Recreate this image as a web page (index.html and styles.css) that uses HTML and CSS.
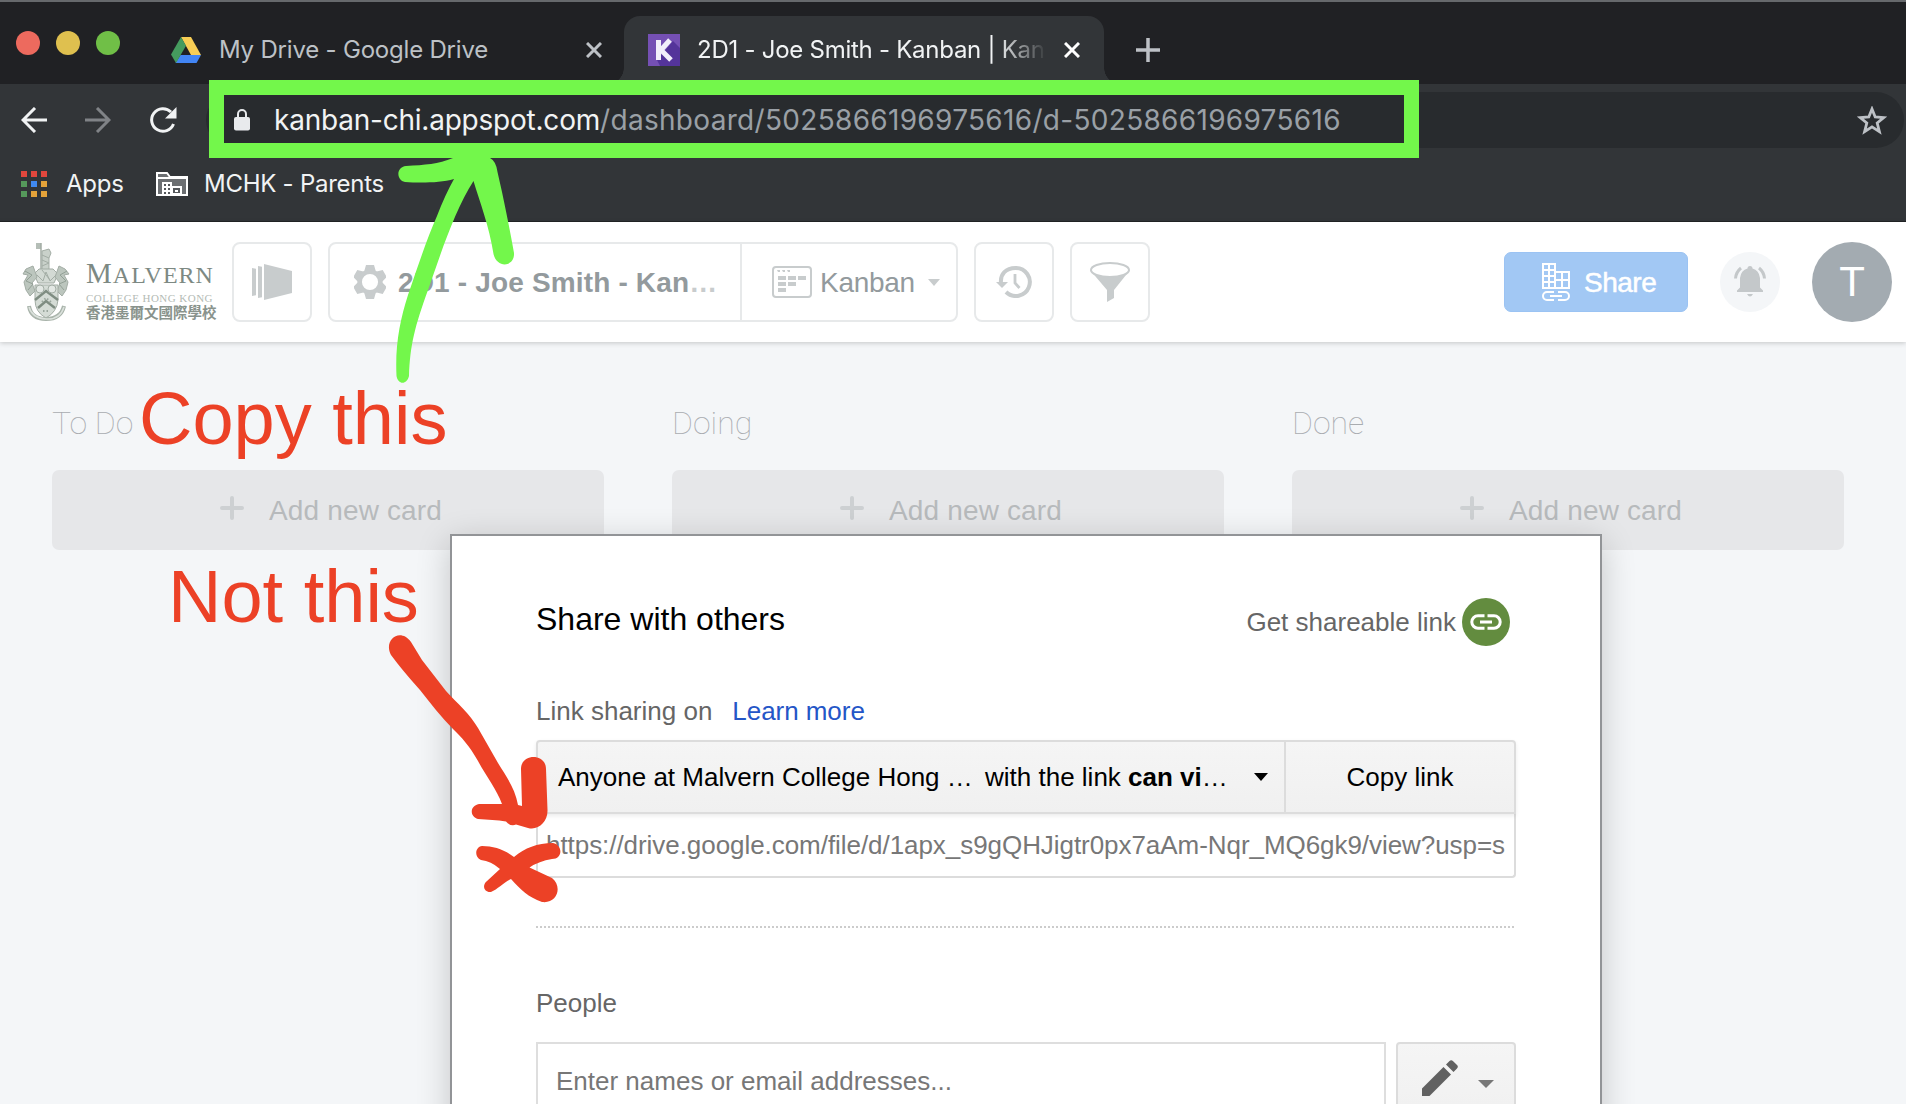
FILE: index.html
```html
<!DOCTYPE html>
<html lang="en">
<head>
<meta charset="utf-8">
<title>2D1 - Joe Smith - Kanban</title>
<link rel="stylesheet" href="styles.css">
</head>
<body>
<div class="window">
  <header class="chrome">
    <div class="tabstrip">
      <div class="lights"><i class="light red"></i><i class="light yellow"></i><i class="light green"></i></div>
      <div class="tab">
        <svg class="drive" width="30" height="26" viewBox="0 0 30 26"><path fill="#f8ce55" d="M10 0h10l10 18H20z"/><path fill="#4285f4" d="M9.500 18H30l-4.500 8H4.500z"/><path fill="#459b5e" d="M10 0l5 8.700L5 26 0 17.500z"/></svg>
        <span class="tab-title">My Drive - Google Drive</span>
        <svg class="close" width="16" height="16" viewBox="0 0 16 16"><path d="M1 1l14 14M15 1L1 15"/></svg>
      </div>
      <div class="tab active">
        <svg class="kicon" width="32" height="32" viewBox="0 0 32 32"><path fill="#7550b4" d="M0 0h32v32H0z"/><path fill="#54349a" d="M25 7l7 7v18H12L9 26z"/><path fill="none" stroke="#f2effa" stroke-width="5" d="M10.500 6v20M22 6l-9 10 10 10"/></svg>
        <span class="tab-title">2D1 - Joe Smith - Kanban | Kan</span>
        <svg class="close" width="16" height="16" viewBox="0 0 16 16"><path d="M1 1l14 14M15 1L1 15"/></svg>
      </div>
      <svg class="newtab" width="24" height="24" viewBox="0 0 24 24"><path d="M12 0v24M0 12h24"/></svg>
    </div>
    <div class="toolbar">
      <svg class="nav" width="26" height="26" viewBox="0 0 26 26"><path d="M26 13H2M14 1L2 13l12 12"/></svg>
      <svg class="nav dim" width="26" height="26" viewBox="0 0 26 26"><path d="M0 13h24M12 1l12 12-12 12"/></svg>
      <svg class="nav reload" width="28" height="28" viewBox="0 0 28 28"><path d="M24.500 18A11.300 11.300 0 1 1 22 6"/><path class="solid" d="M27.500 1v11.500H16z"/></svg>
      <div class="omnibox">
        <svg width="16" height="22" viewBox="0 0 16 22"><rect y="8" width="16" height="13.500" rx="2" fill="#e8eaed"/><path d="M4 9V5a4 4 0 0 1 8 0v4" fill="none" stroke="#e8eaed" stroke-width="2"/></svg>
        <span class="url"><b>kanban-chi.appspot.com</b><span>/dashboard/5025866196975616/d-5025866196975616</span></span>
        <svg class="star" width="30" height="29" viewBox="0 0 30 29"><path d="M15 3l3.200 8 8.600.6-6.600 5.400 2.200 8.600L15 20.800l-7.400 4.800 2.200-8.600-6.600-5.400 8.600-.6z"/></svg>
      </div>
    </div>
    <div class="bookmarks">
      <div class="apps"><i></i><i></i><i></i><i></i><i></i><i></i><i></i><i></i><i></i></div>
      <span class="bm-apps">Apps</span>
      <svg width="32" height="26" viewBox="0 0 32 26"><path d="M1 24V2h10l3 4h17v18z" fill="#6c6f72" stroke="#fff" stroke-width="2"/><path d="M2 7h29" stroke="#fff" stroke-width="2"/><path fill="#fff" d="M6 11h10v4h10v9H6z"/><path fill="#55585b" d="M8 13h2v2H8zm4 0h2v2h-2zm-4 4h2v2H8zm4 0h2v2h-2zm-4 4h2v2H8zm4 0h2v2h-2zm5-4h7v5h-7z"/><path fill="#fff" d="M19 19h3v2h-3z"/></svg>
      <span>MCHK - Parents</span>
    </div>
  </header>

  <nav class="appbar">
    <div class="brand">
      <svg width="48" height="80" viewBox="0 0 48 80" fill="none" stroke="#a3ada5">
        <path fill="#b5beb7" stroke="none" d="M14 1h5v6h-5z"/><path d="M19 1v26" stroke-width="1.500"/>
        <path fill="#c9d1ca" d="M20 9l7-2 2 4-2 5v12h-7z"/><path d="M20 13l7 3M20 18l7 3M20 24l7-3"/>
        <path fill="#d3dad4" d="M12 32l5-5h14l5 5-4 9H16z"/><path d="M15 33l6 6 3-9 4 9 6-6M20 28l8 10"/>
        <path fill="#bcc6be" d="M11 24l-7 3-3 5 5 1-4 7 2 8 4 6 5-5-3-8 5-6zM37 24l6 3 4 5-5 1 4 7-2 8-4 6-5-5 3-8-5-6z"/>
        <path stroke="#93a096" d="M3 29l7 4-6 6 7 3-5 6M45 29l-7 4 6 6-7 3 5 6"/>
        <path fill="#d5dcd6" d="M13 43h23v15q-1 12-12 18-11-6-11-18z"/><path d="M13 58l11-9 12 9M16 66l8-7 9 7" stroke-width="2.500" stroke="#7f8d82"/>
        <circle cx="18" cy="47" r="4" fill="#e3e8e4"/><circle cx="30" cy="47" r="4" fill="#e3e8e4"/>
        <path stroke="#9aa69d" stroke-width="2" stroke-dasharray="1.500 2" d="M20 60l4-4 5 4M21 69h7"/>
        <path stroke="#a9b4ab" stroke-width="4" d="M7 64q2 13 17 13t18-13"/><path stroke="#dbe1dc" stroke-width="1.500" d="M7 65q3 11 17 12t18-12"/>
      </svg>
      <div class="brand-text">
        <div class="malvern"><big>M</big>ALVERN</div>
        <div class="college">COLLEGE HONG KONG</div>
        <div class="han">香港墨爾文國際學校</div>
      </div>
    </div>
    <div class="tool"><svg width="40" height="36" viewBox="0 0 40 36" fill="#c8cccd"><path d="M0 4l4 .8v26.400L0 32zM6 2l4 .8v30.400L6 34zM12 0l28 7v22l-28 7z"/></svg></div>
    <div class="group">
      <div class="title">
        <svg width="32" height="34" viewBox="-16 -17 32 34"><g fill="#c8cccd"><path id="tooth" d="M-4-17h8l2 7H-6zM-4 17h8l2-7H-6z"/><use href="#tooth" transform="rotate(60)"/><use href="#tooth" transform="rotate(120)"/></g><circle r="10.300" fill="#fff" stroke="#c8cccd" stroke-width="4.500"/></svg>
        <b>2D1 - Joe Smith - Kan<span>…</span></b>
      </div>
      <div class="view">
        <svg width="40" height="32" viewBox="0 0 40 32"><rect x="1" y="1" width="38" height="30" rx="3" fill="none" stroke="#c8cccd" stroke-width="2"/><path fill="#c8cccd" d="M5 4h3v2H6zM10 4h3v2h-2zM15 4h3v2h-2zM6 10h8v4H6zm10 0h8v4h-8zm10 0h8v4h-8zM6 16h8v4H6zm10 0h8v4h-8zM6 22h8v4H6z"/></svg>
        <span>Kanban</span>
        <svg width="12" height="7" viewBox="0 0 12 7"><path fill="#c8cccd" d="M0 0h12L6 7z"/></svg>
      </div>
    </div>
    <div class="tool"><svg width="36" height="32" viewBox="0 0 36 32"><path d="M5 17C4 8 10 2 19.500 2a14 14 0 1 1-9.500 24" fill="none" stroke="#c8cccd" stroke-width="4"/><path fill="#c8cccd" d="M0 16h12l-6 6z"/><path d="M19 8v9l4.500 5" fill="none" stroke="#c8cccd" stroke-width="2.800"/></svg></div>
    <div class="tool"><svg width="40" height="40" viewBox="0 0 40 40" fill="#c8cccd"><path d="M0 8l17 20v12l7-4V28L40 8z"/><ellipse cx="20" cy="8" rx="19" ry="7" fill="#fff" stroke="#c8cccd" stroke-width="2"/></svg></div>
    <div class="share">
      <svg width="28" height="38" viewBox="0 0 28 38" fill="none" stroke="#fff" stroke-width="2"><path d="M1 1h12v24H1zM7 1v24M1 7h12M1 13h12M1 19h12M13 9h14v16H13M20 9v16M13 17h14"/><path d="M12 29H5a4 4 0 0 0 0 8h7M16 29h7a4 4 0 0 1 0 8h-7M8 33h12"/></svg>
      <span>Share</span>
    </div>
    <div class="bell"><svg width="32" height="32" viewBox="0 0 32 32" fill="#c4c8ca"><path d="M3 26v-1.500l3-3V12q1-8 7.500-9.500a2.500 2.500 0 0 1 5 0Q25 4 26 12v9.500l3 3V26zM13 28h6q-3 5-6 0z"/><path d="M7 2Q2 6 1.500 12.500M25 2q5 4 5.500 10.500" fill="none" stroke="#c4c8ca" stroke-width="3"/></svg></div>
    <div class="avatar">T</div>
  </nav>

  <main class="board">
    <section><h2>To Do</h2><div class="add"><svg width="24" height="24" viewBox="0 0 24 24"><path d="M12 2v20M2 12h20"/></svg><span>Add new card</span></div></section>
    <section><h2>Doing</h2><div class="add"><svg width="24" height="24" viewBox="0 0 24 24"><path d="M12 2v20M2 12h20"/></svg><span>Add new card</span></div></section>
    <section><h2>Done</h2><div class="add"><svg width="24" height="24" viewBox="0 0 24 24"><path d="M12 2v20M2 12h20"/></svg><span>Add new card</span></div></section>
  </main>

  <div class="dialog">
    <div class="dialog-head">
      <h1>Share with others</h1>
      <div class="getlink"><span>Get shareable link</span><svg width="48" height="48" viewBox="0 0 48 48"><circle cx="24" cy="24" r="24" fill="#638c3f"/><path d="M22.500 17.800H16a6.200 6.200 0 0 0 0 12.400h6.500M25.500 17.800H32a6.200 6.200 0 0 1 0 12.400h-6.500M18 24h12" fill="none" stroke="#fff" stroke-width="3"/></svg></div>
    </div>
    <div class="sharing"><span>Link sharing on</span><a>Learn more</a></div>
    <div class="linkrow">
      <div class="who"><span>Anyone at Malvern College Hong …</span><span>with the link <b>can vi</b>…</span><svg width="14" height="8" viewBox="0 0 14 8"><path d="M0 0h14L7 8z"/></svg></div>
      <div class="copy"><span>Copy link</span></div>
    </div>
    <div class="linkurl"><span>https://drive.google.com/file/d/1apx_s9gQHJigtr0px7aAm-Nqr_MQ6gk9/view?usp=s</span></div>
    <div class="rule"></div>
    <div class="people">People</div>
    <div class="invite">
      <div class="names"><span>Enter names or email addresses...</span></div>
      <div class="role"><svg width="36" height="36" viewBox="0 0 36 36"><path fill="#616161" d="M0 28.500L21.500 7l7.500 7.500L7.500 36H0zM24 4.500L27.500 1q1.700-1.500 3.400 0L35 5q1.700 1.700 0 3.400L31.500 12z"/></svg><svg class="tri" width="16" height="8" viewBox="0 0 16 8"><path fill="#777" d="M0 0h16L8 8z"/></svg></div>
    </div>
  </div>

  <div class="highlight"></div>
  <svg class="ink" width="1906" height="1104" viewBox="0 0 1906 1104">
    <path fill="#73f74b" d="M396.500 376C395 345 400 320 408 295C420 260 428 236 437 216Q445 195 454 179C440 183 420 183 405 182C396 180 396 167 406 166C425 165 438 164 453 158H490Q496 161 497.500 172L502 192Q510 230 514 253C515 267 497 269 493.500 254C489 225 480 203 473.500 181C455 210 442 250 428 290C415 326 410 345 409 376C407 385 398 385 396.500 376Z"/>
    <path fill="#ec4126" d="M391 655C383 640 400 627 411 642L422 660L446 691C457 703 470 714 478 728L498 763C506 776 515 788 518 805L522 806L521 769C521 753 546 753 546 769L547.500 810C548 822 538 831 528 828L516 824.500Q511 827 506 821.500C497 820 488 820 478 819C470 817 469 806 479 804H502C497 790 486 776 478 761C469 745 462 738 453 729C441 717 431 704 420 690Q402 670 391 655Z"/>
    <path fill="#ec4126" d="M482 846C494 846 505 850 514 857C525 848 537 843 553 843C563 845 563 859 552 859Q539 861 529.500 867.500L552 878C563 887 557 904 542 902C528 897 521 890 511 879C503 883 498 889 491 892C485 893 481 886 487 881L500 869Q491 861 481 860C474 857 475 847 482 846Z"/>
  </svg>
  <div class="note n1">Copy this</div>
  <div class="note n2">Not this</div>
</div>
</body>
</html>
```
FILE: styles.css
```css
* { box-sizing: border-box; }
body { margin: 0; font-family: "Liberation Sans", Arial, sans-serif; }
svg { display: block; flex: none; }
span, b, a, h1, h2, .note { white-space: nowrap; }
.window { position: relative; width: 1906px; height: 1104px; overflow: hidden; background: #f4f6f8; }

/* browser chrome */
.chrome { height: 222px; background: #323538; border-bottom: 1px solid #222426; font-family: Inter, Roboto, sans-serif; color: #f1f3f4; }
.tabstrip { display: flex; height: 84px; background: #202124; border-top: 2px solid #66696c; padding-left: 16px; }
.lights { display: flex; gap: 16px; padding-top: 29px; }
.light { width: 24px; height: 24px; border-radius: 50%; }
.red { background: #ed6a5e; }
.yellow { background: #dfc04f; }
.green { background: #70bf47; }
.tab { display: flex; align-items: center; height: 68px; margin-top: 14px; font-size: 24px; letter-spacing: -.2px; color: #bdc1c6; }
.tab:not(.active) { width: 482px; padding-left: 51px; }
.drive { margin-right: 18px; }
.tab-title { flex: none; width: 367px; line-height: 32px; }
.close { fill: none; stroke: #bdc1c6; stroke-width: 3; }
.tab.active { position: relative; width: 480px; margin-left: 22px; padding: 0 24px; background: #323538; border-radius: 16px 16px 0 0; color: #f1f3f4; letter-spacing: -.26px; }
.tab.active::before, .tab.active::after { content: ""; position: absolute; bottom: 0; width: 16px; height: 16px; }
.tab.active::before { left: -16px; background: radial-gradient(circle at 0 0, transparent 15.500px, #323538 16px); }
.tab.active::after { right: -16px; background: radial-gradient(circle at 100% 0, transparent 15.500px, #323538 16px); }
.kicon { margin-right: 17px; }
.active .tab-title { width: 367px; -webkit-mask-image: linear-gradient(90deg, #000 300px, transparent 350px); mask-image: linear-gradient(90deg, #000 300px, transparent 350px); }
.active .close { stroke: #fff; }
.newtab { margin: 36px 0 0 32px; fill: none; stroke: #bdc1c6; stroke-width: 3.500; }
.toolbar { display: flex; align-items: center; height: 72px; padding: 0 2px 0 21px; }
.nav { margin-right: 38px; fill: none; stroke: #f1f3f4; stroke-width: 3; }
.nav.dim { stroke: #808387; }
.reload { margin-right: 29px; }
.reload .solid { fill: #f1f3f4; stroke: none; }
.omnibox { display: flex; align-items: center; flex: 1; height: 56px; padding: 0 17px 0 28px; border-radius: 28px; background: #282b2e; font-size: 28px; }
.url { margin-left: 24px; margin-right: 2px; flex: 1; color: #9aa0a6; line-height: 36px; letter-spacing: .31px; }
.url b { font-weight: 400; color: #f1f3f4; letter-spacing: -.22px; }
.star { fill: none; stroke: #bdc1c6; stroke-width: 2.800; }
.bookmarks { display: flex; align-items: center; height: 56px; padding-left: 21px; font-size: 24px; letter-spacing: -.26px; }
.bookmarks span { margin-top: -2px; }
.apps { display: grid; grid-template-columns: repeat(3, 6px); grid-auto-rows: 6px; gap: 4px; }
.apps i { background: #e4a33a; }
.apps i:nth-child(-n+3) { background: #e1473d; }
.apps i:nth-child(4), .apps i:nth-child(7) { background: #55995b; }
.apps i:nth-child(5) { background: #4089f0; }
.bm-apps { width: 90px; margin-left: 19px; }
.bookmarks svg + span { margin-left: 16px; }

/* application bar */
.appbar { display: flex; align-items: center; height: 120px; padding: 0 14px 0 22px; background: #fff; box-shadow: 0 1px 5px rgba(0,0,0,.2); position: relative; }
.brand { display: flex; width: 210px; gap: 16px; }
.malvern { font: 24px/24px "Liberation Serif", serif; letter-spacing: 1px; color: #7d8983; margin-top: 19px; white-space: nowrap; }
.malvern big { font-size: 29px; line-height: 24px; }
.college { font: 11px/14px "Liberation Serif", serif; letter-spacing: .46px; color: #b4bbb5; margin-top: 4px; white-space: nowrap; }
.han { font: 600 14.500px/18px "Noto Sans CJK TC", sans-serif; color: #89938c; white-space: nowrap; margin-top: -2px; }
.tool { display: flex; align-items: center; justify-content: center; width: 80px; height: 80px; border: 2px solid #e7e9ea; border-radius: 8px; margin-right: 16px; }
.group { display: flex; width: 630px; height: 80px; border: 2px solid #e7e9ea; border-radius: 8px; margin-right: 16px; color: #939a9d; font-size: 28px; }
.title { display: flex; align-items: center; width: 412px; padding-left: 24px; border-right: 2px solid #e7e9ea; }
.title b { margin: 2px 0 0 12px; letter-spacing: .16px; }
.title b span { color: #c8cccd; }
.view { display: flex; align-items: center; padding-left: 30px; }
.view span { width: 95px; margin: 2px 13px 0 8px; letter-spacing: -.3px; }
.share { display: flex; align-items: center; width: 184px; height: 60px; margin: 0 32px 0 auto; padding-left: 37px; gap: 14px; border: 1px solid #9bc3f3; border-radius: 7px; background: #a2c8f4; color: #fff; font-size: 28px; -webkit-text-stroke: .5px #fff; }
.share span { margin-top: 2px; letter-spacing: -.5px; }
.bell { display: flex; align-items: center; justify-content: center; width: 60px; height: 60px; border-radius: 50%; background: #f4f6f8; margin-right: 32px; }
.avatar { width: 80px; height: 80px; border-radius: 50%; background: #a3abb1; color: #fff; font-size: 42px; line-height: 80px; text-align: center; }

/* board */
.board { display: flex; gap: 68px; padding: 62px 52px 0; }
.board section { width: 552px; }
.board h2 { margin: 0; font: 100 32px/38px Roboto, Inter, sans-serif; color: #a9acb0; height: 66px; }
.add { display: flex; align-items: center; height: 80px; padding-left: 168px; gap: 25px; border-radius: 7px; background: #e6e7e9; color: #b7babc; font-size: 28px; letter-spacing: .15px; }
.add svg { fill: none; stroke: #cdd0d2; stroke-width: 4; stroke-linecap: round; margin-top: -4px; }
.add span { margin-top: 2px; }

/* sharing dialog */
.dialog { position: absolute; left: 450px; top: 534px; width: 1152px; height: 640px; padding: 62px 84px 0; border: 2px solid #929497; background: #fff; box-shadow: 0 8px 32px rgba(0,0,0,.2); font-size: 26px; color: #666; }
.dialog-head { display: flex; justify-content: space-between; height: 48px; padding-right: 6px; }
.dialog h1 { margin: 0; font-size: 32px; font-weight: 400; line-height: 42px; color: #000; }
.getlink { display: flex; align-items: center; gap: 6px; }
.sharing { display: flex; gap: 20px; margin-top: 49px; height: 45px; line-height: 32px; }
.sharing a { color: #2456c7; letter-spacing: -.05px; }
.linkrow { display: flex; height: 74px; border: 2px solid #dcdcdc; border-radius: 4px 4px 0 0; background: linear-gradient(#f5f5f5, #f0f0f0); color: #000; box-shadow: 0 2px 4px rgba(0,0,0,.08); position: relative; line-height: 70px; }
.who { display: flex; align-items: center; width: 748px; padding-left: 20px; border-right: 2px solid #dcdcdc; }
.who span:first-child { width: 427px; }
.who svg { margin: 0 16px 0 auto; }
.copy { flex: 1; text-align: center; }
.linkurl { height: 64px; border: 2px solid #dcdcdc; border-top: 0; border-radius: 0 0 4px 4px; padding: 0 7px 0 8px; line-height: 63px; color: #777; }
.linkurl span { display: block; overflow: hidden; letter-spacing: -.055px; }
.rule { height: 2px; margin-top: 48px; background: repeating-linear-gradient(90deg, #ccc 0 2px, transparent 2px 4px); }
.people { margin-top: 59px; height: 55px; line-height: 32px; }
.invite { display: flex; gap: 10px; height: 80px; }
.names { width: 850px; border: 2px solid #dedede; padding-left: 18px; line-height: 75px; color: #777; }
.role { display: flex; flex: 1; gap: 20px; border: 2px solid #dcdcdc; border-radius: 4px; background: linear-gradient(#f5f5f5, #f0f0f0); padding: 16px 0 0 24px; }
.tri { margin-top: 20px; }

/* hand-drawn annotations */
.highlight { position: absolute; left: 209px; top: 80px; width: 1210px; height: 78px; border: 15px solid #73f74b; }
.ink { position: absolute; inset: 0; }
.note { position: absolute; font-size: 74px; line-height: 84px; color: #ec4126; }
.n1 { left: 139px; top: 377px; }
.n2 { left: 168px; top: 555px; }
```
